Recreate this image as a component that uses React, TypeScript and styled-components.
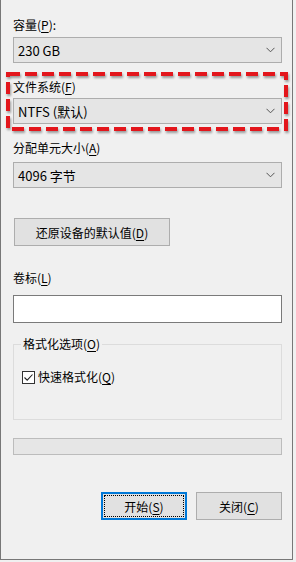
import * as React from "react"
import styled, { createGlobalStyle } from "styled-components"

const GlobalStyle = createGlobalStyle`
  html, body {
    margin: 0;
    padding: 0;
    background: #f0f0f0;
  }
  body {
    font-family: "Noto Sans CJK SC", "Noto Sans", sans-serif;
    font-size: 12px;
    color: #000;
  }
`

const Window = styled.div`
  box-sizing: border-box;
  width: 293px;
  height: 560px;
  background: #f0f0f0;
  border-left: 1px solid #777;
  border-right: 1px solid #777;
  border-bottom: 1px solid #777;
  padding: 17px 10px 0 12px;
  display: flex;
  flex-direction: column;
`

const Label = styled.div<{ top?: number }>`
  height: 16px;
  line-height: 16px;
  margin-top: ${({ top }) => top ?? 0}px;
  white-space: nowrap;
`

const Key = styled.span`
  text-decoration: underline;
  text-underline-offset: 2px;
`

const Combo = styled.div<{ top?: number }>`
  box-sizing: border-box;
  height: 26px;
  margin-top: ${({ top }) => top ?? 0}px;
  background: #e5e5e5;
  border: 1px solid #adadad;
  display: flex;
  align-items: center;
  justify-content: space-between;
  padding: 0 6px 0 4px;
  font-size: 13px;
`

const Highlight = styled.div`
  position: relative;
  display: flex;
  flex-direction: column;
  margin-top: 16px;
`

const DashOverlay = styled.svg`
  position: absolute;
  left: -7px;
  top: -7px;
  overflow: visible;
  pointer-events: none;
`

const PlainButton = styled.button<{ width: number; top?: number }>`
  box-sizing: border-box;
  width: ${({ width }) => width}px;
  height: 28px;
  margin-top: ${({ top }) => top ?? 0}px;
  background: #e1e1e1;
  border: 1px solid #adadad;
  font: inherit;
  color: #000;
  padding: 0;
  display: flex;
  align-items: center;
  justify-content: center;
`

const ResetButton = styled(PlainButton)`
  margin-left: 1px;
`

const FocusButton = styled(PlainButton)`
  border: 2px solid #0078d7;
  padding: 1px;
`

const FocusRing = styled.span`
  box-sizing: border-box;
  width: 100%;
  height: 100%;
  border: 1px dotted #000;
  display: flex;
  align-items: center;
  justify-content: center;
`

const TextBox = styled.div`
  box-sizing: border-box;
  height: 28px;
  margin-top: 9px;
  background: #fff;
  border: 1px solid #7a7a7a;
`

const GroupBox = styled.fieldset`
  box-sizing: border-box;
  height: 84px;
  margin: 13px 0 0;
  border: 1px solid #dcdcdc;
  padding: 17px 8px 0 8px;
  min-width: 0;
`

const Legend = styled.legend`
  padding: 0 2px;
  margin-left: -1px;
  line-height: 16px;
`

const CheckRow = styled.label`
  display: flex;
  align-items: center;
  gap: 3px;
  line-height: 16px;
`

const CheckBox = styled.span`
  box-sizing: border-box;
  width: 13px;
  height: 13px;
  border: 1px solid #333;
  background: #fff;
  display: flex;
  align-items: center;
  justify-content: center;
`

const Progress = styled.div`
  box-sizing: border-box;
  height: 17px;
  margin-top: 18px;
  background: #e6e6e6;
  border: 1px solid #bcbcbc;
`

const ButtonRow = styled.div`
  display: flex;
  justify-content: flex-end;
  gap: 9px;
  margin-top: 37px;
`

const Chevron = () => (
  <svg width="9" height="6" viewBox="0 0 9 6">
    <path d="M0.5 0.8 L4.5 4.8 L8.5 0.8" fill="none" stroke="#555" strokeWidth="1" />
  </svg>
)

export default function App() {
  return (
    <>
      <GlobalStyle />
      <Window>
        <Label>容量(<Key>P</Key>):</Label>
        <Combo top={4}>
          <span>230 GB</span>
          <Chevron />
        </Combo>

        <Highlight>
          <Label>文件系统(<Key>F</Key>)</Label>
          <Combo top={3}>
            <span>NTFS (默认)</span>
            <Chevron />
          </Combo>
          <DashOverlay width="283" height="60">
            <defs>
              <filter id="shade" x="-5%" y="-20%" width="110%" height="140%">
                <feDropShadow dx="1" dy="2" stdDeviation="1.2" floodColor="#000" floodOpacity="0.35" />
              </filter>
            </defs>
            <rect
              x="2"
              y="2"
              width="278"
              height="55"
              fill="none"
              stroke="#e3141b"
              strokeWidth="4"
              strokeDasharray="12 5"
              filter="url(#shade)"
            />
          </DashOverlay>
        </Highlight>

        <Label top={16}>分配单元大小(<Key>A</Key>)</Label>
        <Combo top={6}>
          <span>4096 字节</span>
          <Chevron />
        </Combo>

        <ResetButton width={156} top={30}>
          <span>还原设备的默认值(<Key>D</Key>)</span>
        </ResetButton>

        <Label top={24}>卷标(<Key>L</Key>)</Label>
        <TextBox />

        <GroupBox>
          <Legend>格式化选项(<Key>O</Key>)</Legend>
          <CheckRow>
            <CheckBox>
              <svg width="11" height="11" viewBox="0 0 11 11">
                <path d="M1.5 5.5 L4.2 8.2 L9.5 2.5" fill="none" stroke="#222" strokeWidth="1.1" />
              </svg>
            </CheckBox>
            <span>快速格式化(<Key>Q</Key>)</span>
          </CheckRow>
        </GroupBox>

        <Progress />

        <ButtonRow>
          <FocusButton width={86}>
            <FocusRing>
              <span>开始(<Key>S</Key>)</span>
            </FocusRing>
          </FocusButton>
          <PlainButton width={86}>
            <span>关闭(<Key>C</Key>)</span>
          </PlainButton>
        </ButtonRow>
      </Window>
    </>
  )
}
